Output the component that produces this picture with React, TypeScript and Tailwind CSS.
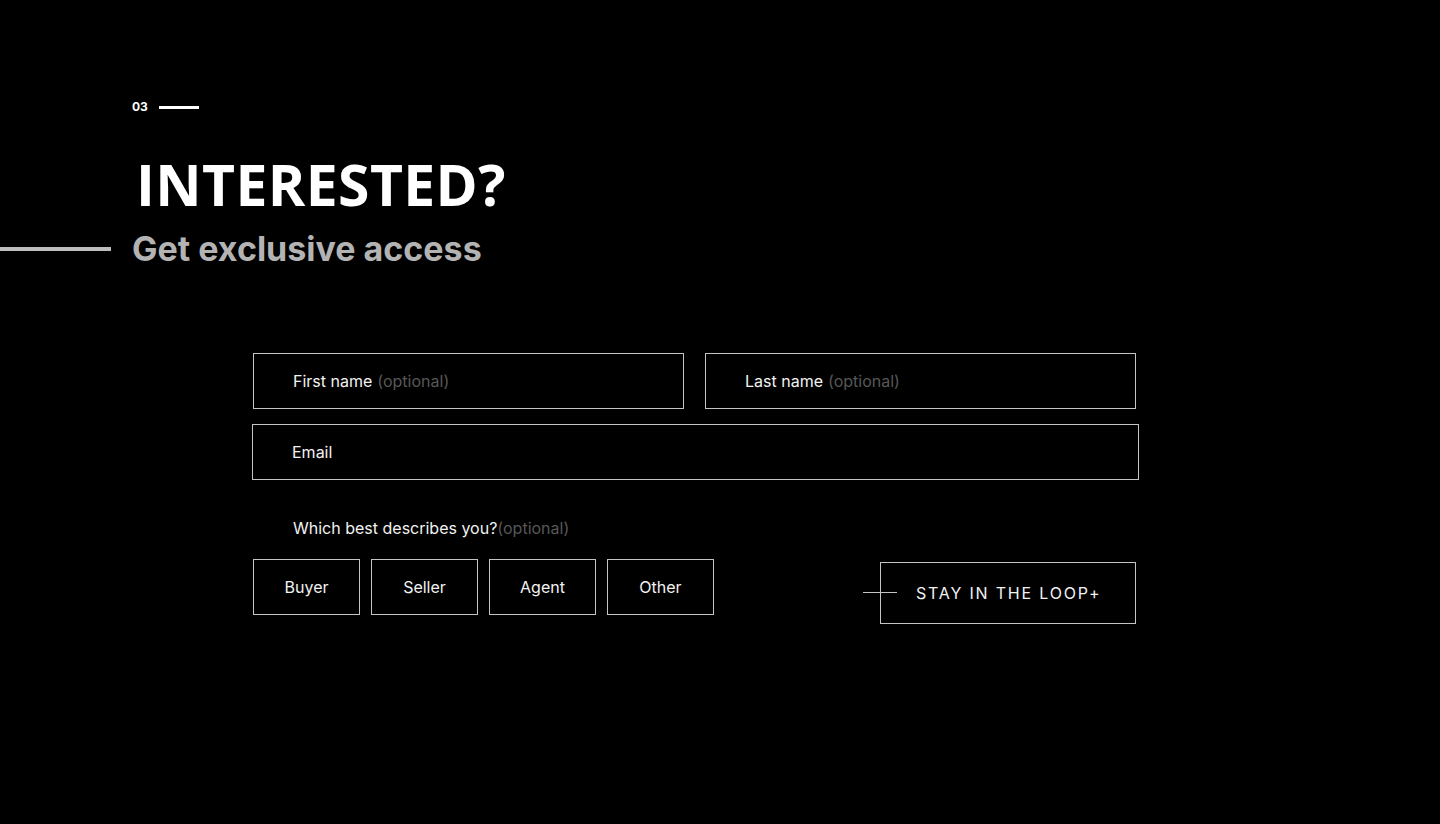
import React, { useState } from "react";

const roles = ["Buyer", "Seller", "Agent", "Other"];

const App = () => {
  const [role, setRole] = useState("");

  return (
    <div className="w-full min-h-[824px] bg-black text-white font-['Inter',sans-serif]">
      <div className="pt-[100px]">
        <div className="flex items-center gap-[11px] pl-[132px]">
          <span className="text-[12px] font-bold leading-[14px]">03</span>
          <span className="block w-[40px] h-[3px] bg-white" />
        </div>

        <h1 className="pl-[136px] mt-[35px] text-[57px] leading-[70px] font-bold font-['Open_Sans',sans-serif] tracking-[0.4px]">
          INTERESTED?
        </h1>

        <div className="flex items-center gap-[21px] mt-[8px]">
          <span className="block w-[111px] h-[4px] bg-[#bdbdbd]" />
          <h2 className="text-[34px] leading-[44px] font-bold text-[#b3b3b3]">
            Get exclusive access
          </h2>
        </div>
      </div>

      <form className="pl-[252px] mt-[82px] w-[1139px]" onSubmit={(e) => e.preventDefault()}>
        <div className="flex gap-[21px] pl-[1px] pr-[3px]">
          <label className="flex-1 h-[56px] border border-[#c4c4c4] flex items-center pl-[39px] text-[16px]">
            <span className="text-[#f2f2f2]">First name</span>
            <span className="ml-[5px] text-[#575757]">(optional)</span>
          </label>
          <label className="flex-1 h-[56px] border border-[#c4c4c4] flex items-center pl-[39px] text-[16px]">
            <span className="text-[#f2f2f2]">Last name</span>
            <span className="ml-[5px] text-[#575757]">(optional)</span>
          </label>
        </div>

        <label className="mt-[15px] h-[56px] border border-[#c4c4c4] flex items-center pl-[39px] text-[16px]">
          <span className="text-[#f2f2f2]">Email</span>
        </label>

        <div className="mt-[38px] pl-[41px] text-[16px] leading-[20px]">
          <span className="text-[#f2f2f2]">Which best describes you?</span>
          <span className="text-[#575757]">(optional)</span>
        </div>

        <div className="flex items-start justify-between mt-[21px] pl-[1px] pr-[3px]">
          <div className="flex gap-[11px]">
            {roles.map((r) => (
              <button
                key={r}
                type="button"
                onClick={() => setRole(r)}
                className={`w-[107px] h-[56px] border border-[#c4c4c4] text-[16px] ${
                  role === r ? "bg-white text-black" : "text-[#f2f2f2]"
                }`}
              >
                {r}
              </button>
            ))}
          </div>

          <div className="relative mt-[3px]">
            <span className="absolute left-[-17px] top-[30px] w-[34px] h-px bg-[#c4c4c4]" />
            <button
              type="submit"
              className="w-[256px] h-[62px] border border-[#c4c4c4] text-left pl-[35px] text-[16px] tracking-[1.8px] text-[#f2f2f2]"
            >
              STAY IN THE LOOP+
            </button>
          </div>
        </div>
      </form>
    </div>
  );
};

export default App;
